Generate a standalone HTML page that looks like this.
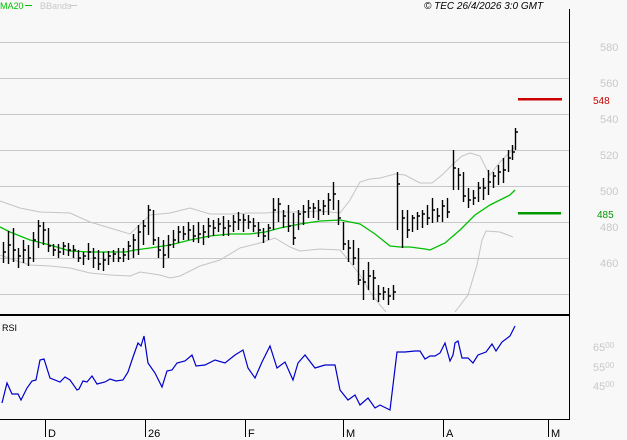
<!DOCTYPE html>
<html><head><meta charset="utf-8"><style>
html,body{margin:0;padding:0;background:#f8f8f8;}
svg{display:block;font-family:"Liberation Sans",sans-serif;}
</style></head><body>
<svg width="627" height="440" viewBox="0 0 627 440" xmlns="http://www.w3.org/2000/svg">
<rect width="627" height="440" fill="#f8f8f8"/>
<g stroke="#c8c8c8" stroke-width="1">
<path d="M0 42.5H569M0 78.5H569M0 114.5H569M0 150.5H569M0 186.5H569M0 222.5H569M0 258.5H569M0 294.5H569"/>
</g>
<g fill="none" stroke="#c4c4c4" stroke-width="1">
<polyline points="0,201 20,208 40,212 70,213 90,222 110,228 130,234 150,215 170,213 190,208 210,214 230,214 250,213 265,213 280,212 300,212 320,211 340,213 350,200 360,182 370,179 380,178 395,174 405,175 420,183 432,183 442,175 452,165 462,156 470,153 480,156 486,168 490,175 500,162 515,147"/>
<polyline points="0,255 20,262 30,265 50,266 70,268 90,273 110,275 130,276 140,272 160,275 170,278 180,276 200,266 210,263 220,260 240,248 260,243 275,238 290,247 300,251 320,249 340,250 350,262 360,275 370,292 380,305 386,312"/>
<polyline points="455,312 468,295 477,265 482,240 486,231 500,232 513,237"/>
</g>
<polyline fill="none" stroke="#00c000" stroke-width="1.3" points="0,227 10,232 30,240 50,245 70,251 90,252 110,252 125,252 135,250 150,248 170,245 190,240 210,236 230,234 250,234 265,232 280,228 300,224 320,221 340,220 345,221 360,224 375,234 390,246 400,247 410,247 425,249 430,250 445,243 460,230 475,215 490,205 500,200 510,195 515,190"/>
<g stroke="#000" stroke-width="1.4" fill="none">
<path d="M3.5 242V263M3.5 252H6M8.5 231V264M8.5 245H11M13.5 228V262M13.5 250H16M18.5 248V268M18.5 256H21M23.5 240V263M23.5 250H26M28.5 245V266M28.5 258H31M33.5 232V262M33.5 240H36M38.5 220V248M38.5 226H41M43.5 222V245M43.5 230H46M48.5 228V252M48.5 246H51M53.5 244V256M53.5 250H56M58.5 244V258M58.5 252H61M63.5 242V255M63.5 246H66M68.5 243V256M68.5 250H71M73.5 245V258M73.5 250H76M78.5 250V262M78.5 258H81M83.5 252V265M83.5 256H86M88.5 243V260M88.5 252H91M93.5 248V268M93.5 258H96M98.5 250V270M98.5 264H101M103.5 252V271M103.5 260H106M108.5 251V265M108.5 256H111M113.5 250V262M113.5 254H116M118.5 248V262M118.5 258H121M123.5 248V262M123.5 255H126M128.5 241V260M128.5 246H131M133.5 234V258M133.5 240H136M138.5 225V255M138.5 232H141M143.5 220V245M143.5 226H146M148.5 205V235M148.5 210H151M153.5 210V245M153.5 240H156M158.5 237V258M158.5 250H161M163.5 240V268M163.5 255H166M168.5 235V258M168.5 245H171M173.5 230V248M173.5 240H176M178.5 226V243M178.5 232H181M183.5 226V240M183.5 234H186M188.5 222V240M188.5 230H191M193.5 225V242M193.5 236H196M198.5 222V243M198.5 234H201M203.5 225V245M203.5 232H206M208.5 218V238M208.5 226H211M213.5 220V236M213.5 228H216M218.5 218V232M218.5 224H221M223.5 216V236M223.5 228H226M228.5 220V236M228.5 226H231M233.5 215V232M233.5 222H236M238.5 212V230M238.5 220H241M243.5 214V232M243.5 220H246M248.5 215V229M248.5 222H251M253.5 218V232M253.5 226H256M258.5 222V237M258.5 230H261M263.5 228V243M263.5 236H266M268.5 224V240M268.5 228H271M273.5 198V230M273.5 210H276M278.5 198V222M278.5 204H281M283.5 210V228M283.5 216H286M288.5 205V232M288.5 226H291M293.5 213V245M293.5 238H296M298.5 210V230M298.5 214H301M303.5 205V225M303.5 212H306M308.5 200V218M308.5 208H311M313.5 203V218M313.5 208H316M318.5 200V220M318.5 210H321M323.5 200V215M323.5 206H326M328.5 193V215M328.5 200H331M333.5 182V210M333.5 194H336M338.5 200V225M338.5 218H341M343.5 222V250M343.5 244H346M348.5 240V262M348.5 248H351M353.5 240V265M353.5 258H356M358.5 248V285M358.5 280H361M363.5 270V300M363.5 282H366M368.5 262V290M368.5 276H371M373.5 270V300M373.5 278H376M378.5 285V302M378.5 294H381M383.5 287V300M383.5 292H386M388.5 288V305M388.5 296H391M393.5 285V300M393.5 292H396M397.5 172V230M397.5 184H400M402.5 210V248M402.5 218H405M407.5 210V238M407.5 230H410M412.5 215V232M412.5 218H415M417.5 212V230M417.5 216H420M422.5 210V228M422.5 214H425M427.5 205V225M427.5 218H430M432.5 198V223M432.5 210H435M437.5 208V222M437.5 216H440M442.5 200V222M442.5 206H445M447.5 198V218M447.5 212H450M453.5 150V190M453.5 168H456M458.5 168V190M458.5 175H461M463.5 172V202M463.5 196H466M468.5 188V208M468.5 200H471M473.5 190V205M473.5 198H476M478.5 182V202M478.5 188H481M483.5 178V200M483.5 188H486M488.5 170V195M488.5 182H491M493.5 172V188M493.5 176H496M498.5 165V185M498.5 172H501M503.5 158V183M503.5 170H506M508.5 150V172M508.5 158H511M512.5 145V160M512.5 152H515M515.5 128V150M515.5 132H518"/>
</g>
<rect x="518" y="98" width="44" height="2.5" fill="#cc0000"/>
<rect x="518" y="212" width="43" height="2.5" fill="#009900"/>
<text x="593" y="104" font-size="10" fill="#cc0000">548</text>
<text x="597" y="218" font-size="10" fill="#009900">485</text>
<g font-size="11" fill="#c8c8c8">
<text x="600" y="51">580</text><text x="600" y="87">560</text><text x="600" y="123">540</text><text x="600" y="159">520</text><text x="600" y="195">500</text><text x="600" y="231">480</text><text x="600" y="267">460</text>
<text x="593" y="351">65<tspan font-size="8" dy="-3">00</tspan></text>
<text x="593" y="371">55<tspan font-size="8" dy="-3">00</tspan></text>
<text x="593" y="390">45<tspan font-size="8" dy="-3">00</tspan></text>
</g>
<text x="0" y="9" font-size="9" fill="#00c000">MA20</text>
<rect x="25" y="5" width="7" height="1" fill="#00c000"/>
<text x="40" y="9" font-size="9" fill="#c8c8c8">BBands</text>
<rect x="70" y="5" width="7" height="1" fill="#c8c8c8"/>
<text x="424" y="9" font-size="10" font-style="italic" fill="#000">© TEC 26/4/2026 3:0 GMT</text>
<path d="M569.5 9V419" stroke="#000" stroke-width="1"/>
<rect x="0" y="314" width="570" height="2" fill="#000"/>
<path d="M0 419.5H570" stroke="#000" stroke-width="1"/>
<text x="2" y="331" font-size="9" fill="#000">RSI</text>
<polyline fill="none" stroke="#0000cc" stroke-width="1.2" points="2,403 7,383 12,394 18,394 21,400 27,388 32,381 36,380 40,360 44,359 50,378 60,382 65,377 70,380 77,390 79,389 83,381 87,382 92,376 97,384 105,382 110,379 116,381 123,380 128,372 133,357 138,343 141,346 144,336 148,363 155,373 162,387 167,371 172,370 177,363 185,361 192,355 196,366 205,365 215,360 225,363 235,355 243,350 248,368 255,378 262,362 270,346 277,368 285,362 293,380 298,363 305,355 315,368 325,365 335,365 340,390 348,400 355,395 360,405 368,398 375,408 380,405 390,410 397,352 405,352 415,351 420,351 425,359 430,356 435,356 440,353 445,343 450,361 453,355 455,343 458,341 462,358 468,358 473,363 478,355 486,352 492,344 496,351 502,342 510,336 515,326"/>
<g stroke="#000" stroke-width="1"><path d="M45.5 419V437M145.5 419V437M245.5 419V437M343.5 419V437M443.5 419V437M548.5 419V437"/></g>
<g font-size="11" fill="#000">
<text x="48" y="437">D</text><text x="148" y="437">26</text><text x="248" y="437">F</text><text x="346" y="437">M</text><text x="446" y="437">A</text><text x="551" y="437">M</text>
</g>
</svg>
</body></html>
